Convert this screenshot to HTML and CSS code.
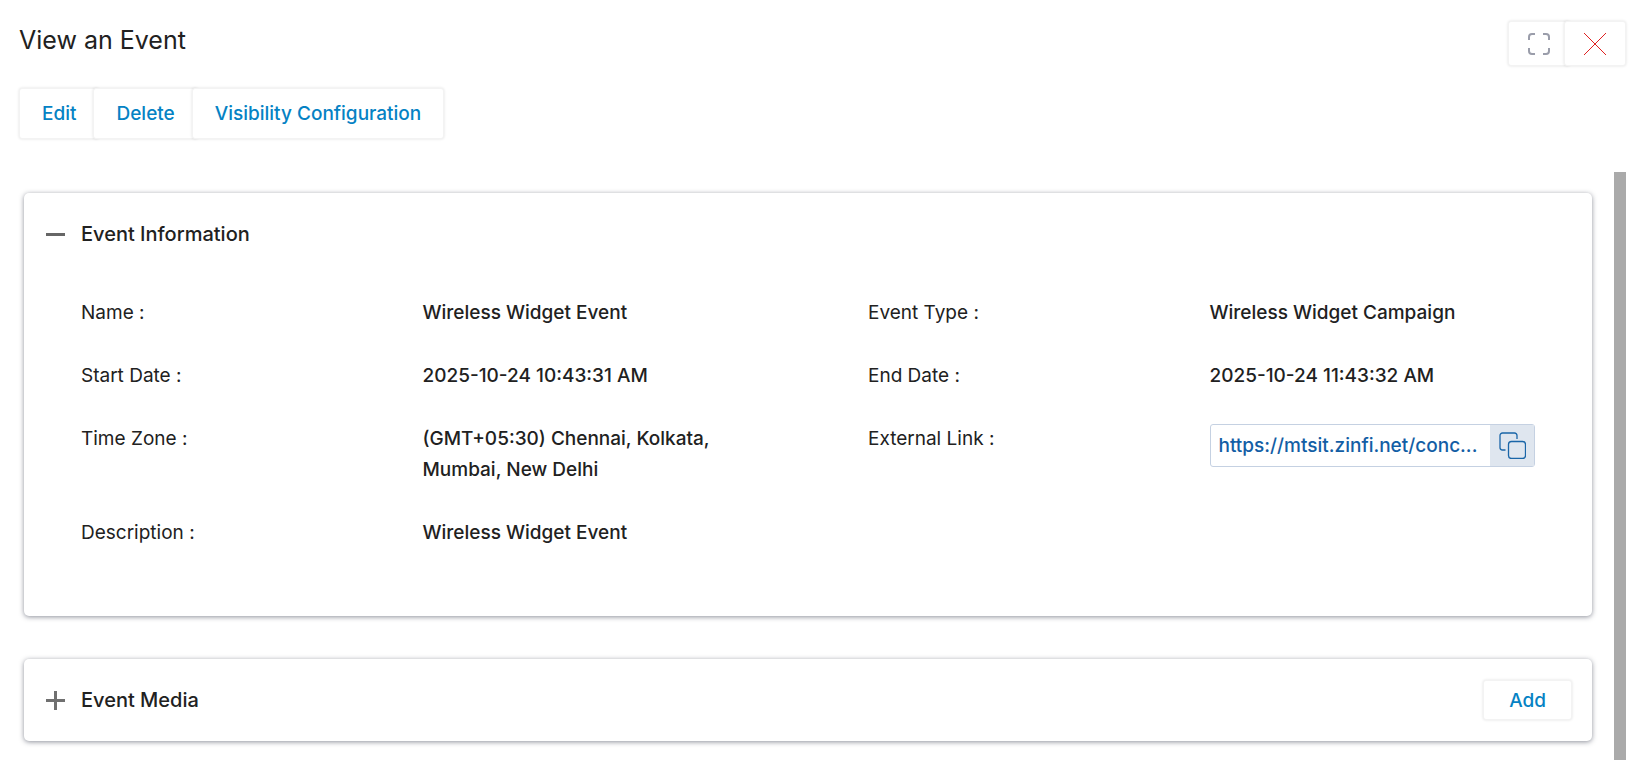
FILE: index.html
```html
<!DOCTYPE html>
<html lang="en">
<head>
    <meta charset="UTF-8">
    <meta name="viewport" content="width=device-width, initial-scale=1.0">
    <title>View an Event</title>
    <link rel="stylesheet" href="styles.css">
</head>
<body>
    <div class="page">
        <header class="page-header">
            <h1>View an Event</h1>
            <div class="window-actions">
                <button type="button" class="btn btn-icon" aria-label="Full screen">
                    <svg width="22" height="22" viewBox="0 0 22 22" fill="none" stroke="#9a9daa" stroke-width="2">
                        <path d="M1 7V4a3 3 0 0 1 3-3h3M15 1h3a3 3 0 0 1 3 3v3M21 15v3a3 3 0 0 1-3 3h-3M7 21H4a3 3 0 0 1-3-3v-3"/>
                    </svg>
                </button>
                <button type="button" class="btn btn-icon" aria-label="Close">
                    <svg width="22" height="22" viewBox="0 0 22 22" fill="none" stroke="#e02020" stroke-width="1">
                        <path d="M0 0L22 22M22 0L0 22"/>
                    </svg>
                </button>
            </div>
        </header>

        <div class="toolbar">
            <button type="button" class="btn">Edit</button>
            <button type="button" class="btn">Delete</button>
            <button type="button" class="btn">Visibility Configuration</button>
        </div>

        <div class="scroll-area">
            <main class="cards">
                <section class="card">
                    <div class="card-header">
                        <button type="button" class="toggle" aria-label="Collapse" aria-expanded="true">
                            <svg width="19" height="19" viewBox="0 0 19 19"><path d="M0 8h19v3H0z" fill="#666"/></svg>
                        </button>
                        <h2>Event Information</h2>
                    </div>
                    <dl class="details">
                        <div class="field">
                            <dt>Name :</dt>
                            <dd>Wireless Widget Event</dd>
                        </div>
                        <div class="field">
                            <dt>Event Type :</dt>
                            <dd>Wireless Widget Campaign</dd>
                        </div>
                        <div class="field">
                            <dt>Start Date :</dt>
                            <dd>2025-10-24 10:43:31 AM</dd>
                        </div>
                        <div class="field">
                            <dt>End Date :</dt>
                            <dd>2025-10-24 11:43:32 AM</dd>
                        </div>
                        <div class="field">
                            <dt>Time Zone :</dt>
                            <dd>(GMT+05:30) Chennai, Kolkata, Mumbai, New Delhi</dd>
                        </div>
                        <div class="field">
                            <dt>External Link :</dt>
                            <dd>
                                <div class="link-box">
                                    <a href="#">https://mtsit.zinfi.net/conc...</a>
                                    <button type="button" class="copy" aria-label="Copy link">
                                        <svg width="27" height="27" viewBox="0 0 27 27" fill="none" stroke="#1a66a8" stroke-width="1.3">
                                            <path d="M6.500 18H3.500a2.500 2.500 0 0 1-2.500-2.500V3.500A2.500 2.500 0 0 1 3.500 1h12A2.500 2.500 0 0 1 18 3.500V7"/>
                                            <rect x="9.500" y="9.500" width="17" height="17" rx="3"/>
                                        </svg>
                                    </button>
                                </div>
                            </dd>
                        </div>
                        <div class="field">
                            <dt>Description :</dt>
                            <dd>Wireless Widget Event</dd>
                        </div>
                    </dl>
                </section>

                <section class="card">
                    <div class="card-header">
                        <button type="button" class="toggle" aria-label="Expand" aria-expanded="false">
                            <svg width="19" height="19" viewBox="0 0 19 19"><path d="M0 8h8V0h3v8h8v3h-8v8H8v-8H0z" fill="#707070"/></svg>
                        </button>
                        <h2>Event Media</h2>
                        <button type="button" class="btn btn-add">Add</button>
                    </div>
                </section>
            </main>
            <div class="scrollbar"></div>
        </div>
    </div>
</body>
</html>
```
FILE: styles.css
```css
* {
    box-sizing: border-box;
}

body {
    margin: 0;
    background-color: #fff;
    color: #212121;
    font-family: Inter, "Open Sans", sans-serif;
    font-size: 19px;
    line-height: 31px;
}

h1, h2, dl, dd {
    margin: 0;
}

.page {
    display: flex;
    flex-direction: column;
    min-height: 100vh;
    padding: 21px 18px 0 19px;
}

.page-header {
    display: flex;
    justify-content: space-between;
    height: 67px;
}

h1 {
    font-size: 25px;
    font-weight: 400;
    line-height: 38px;
}

.window-actions,
.toolbar {
    display: flex;
    align-items: flex-start;
}

.btn {
    height: 51px;
    padding: 0 22px;
    background-color: #fff;
    border: 1px solid #f3f3f3;
    border-radius: 3px;
    box-shadow: 0 0 3px rgba(0, 0, 0, 0.12);
    color: #0582c4;
    font-family: inherit;
    font-size: 19px;
    font-weight: 500;
    cursor: pointer;
}

.btn:hover {
    background-color: #f5fafd;
}

.btn + .btn {
    margin-left: -6px;
}

.btn-icon {
    display: flex;
    align-items: center;
    justify-content: center;
    width: 62px;
    height: 45px;
    padding: 0;
}

.scroll-area {
    display: flex;
    flex: 1;
    margin-top: 33px;
}

.cards {
    flex: 1;
    padding: 21px 22px 16px 5px;
}

.scrollbar {
    width: 12px;
    background-color: #aaa;
}

.card {
    padding: 20px;
    border-radius: 5px;
    background-color: #fff;
    box-shadow: 0 1px 5px rgba(30, 35, 55, 0.5);
}

.card + .card {
    margin-top: 43px;
}

.card-header {
    display: flex;
    align-items: center;
    min-height: 42px;
}

h2 {
    padding-top: 1px;
    font-size: 20px;
    font-weight: 500;
}

.toggle {
    display: flex;
    margin: 0 16px 0 2px;
    padding: 0;
    border: 0;
    background: none;
    cursor: pointer;
}

.btn-add {
    height: 40px;
    margin-left: auto;
    padding: 0 25px;
}

.details {
    display: grid;
    grid-template-columns: 1fr 1fr;
    gap: 32px 120px;
    padding: 42px 37px 48px;
}

.field {
    display: grid;
    grid-template-columns: 341fr 325fr;
}

dd {
    min-width: 0;
    font-weight: 500;
}

.link-box {
    display: flex;
    height: 43px;
    margin-top: 1px;
    border: 1px solid #c5d1e2;
    border-radius: 3px;
}

.link-box a {
    flex: 1;
    padding-left: 8px;
    overflow: hidden;
    color: #135ea5;
    line-height: 41px;
    text-decoration: none;
    white-space: nowrap;
}

.copy {
    display: flex;
    align-items: center;
    justify-content: center;
    width: 44px;
    padding: 0;
    border: 0;
    background-color: #dfe6ef;
    cursor: pointer;
}
```
